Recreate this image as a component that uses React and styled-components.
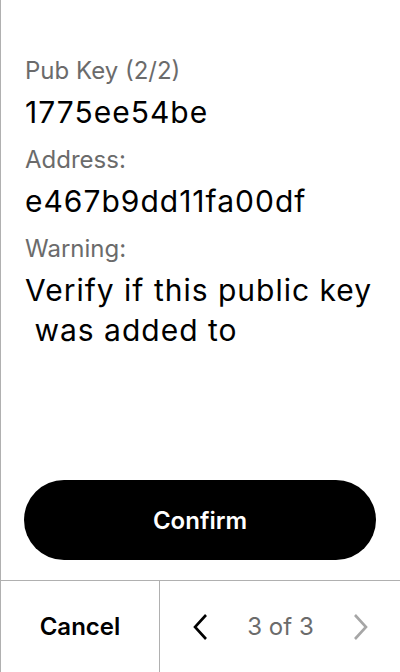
import React from 'react';
import styled, { createGlobalStyle } from 'styled-components';

const GlobalStyle = createGlobalStyle`
    html, body {
        margin: 0;
        padding: 0;
        background: #fff;
    }
    body {
        font-family: Inter, "Noto Sans", "Liberation Sans", sans-serif;
    }
`;

const fields = [
    { label: 'Pub Key (2/2)', value: '1775ee54be' },
    { label: 'Address:', value: 'e467b9dd11fa00df' },
    { label: 'Warning:', value: 'Verify if this public key\n was added to' },
];

const Chevron = ({ dir, color }) => (
    <svg width="16" height="28" viewBox="0 0 16 28">
        {dir === 'left' ? (
            <polyline points="14,2 3,14 14,26" fill="none" stroke={color} strokeWidth="2.6" />
        ) : (
            <polyline points="2,2 13,14 2,26" fill="none" stroke={color} strokeWidth="2.6" />
        )}
    </svg>
);

const App = () => {
    return (
        <Screen>
            <GlobalStyle />
            <Content>
                {fields.map(f => (
                    <Field key={f.label}>
                        <Label>{f.label}</Label>
                        <Value>{f.value}</Value>
                    </Field>
                ))}
            </Content>

            <ButtonArea>
                <ConfirmButton>Confirm</ConfirmButton>
            </ButtonArea>

            <Footer>
                <CancelButton>Cancel</CancelButton>
                <Nav>
                    <NavArrow><Chevron dir="left" color="#000" /></NavArrow>
                    <PageCount>3 of 3</PageCount>
                    <NavArrow><Chevron dir="right" color="#a6a6a6" /></NavArrow>
                </Nav>
            </Footer>
        </Screen>
    );
};
export default App;

const Screen = styled.div`
    width: 400px;
    height: 672px;
    box-sizing: border-box;
    border-left: 1px solid #b0b0b0;
    display: flex;
    flex-direction: column;
    background: #fff;
`;

const Content = styled.div`
    flex: 1;
    padding: 55px 20px 0 24px;
    display: flex;
    flex-direction: column;
    gap: 12px;
`;

const Field = styled.div`
    display: flex;
    flex-direction: column;
    gap: 5px;
`;

const Label = styled.div`
    font-size: 24px;
    line-height: 32px;
    color: #6b6b6b;
`;

const Value = styled.div`
    font-size: 30px;
    line-height: 40px;
    letter-spacing: 1px;
    color: #000;
    white-space: pre;
`;

const ButtonArea = styled.div`
    padding: 0 24px 20px 23px;
`;

const ConfirmButton = styled.button`
    display: block;
    width: 100%;
    height: 80px;
    border: none;
    border-radius: 40px;
    background: #000;
    color: #fff;
    font-family: inherit;
    font-size: 24px;
    font-weight: 600;
`;

const Footer = styled.div`
    height: 92px;
    box-sizing: border-box;
    border-top: 1px solid #b0b0b0;
    display: grid;
    grid-template-columns: 159px 1fr;
`;

const CancelButton = styled.div`
    display: flex;
    align-items: center;
    justify-content: center;
    font-size: 24px;
    font-weight: 600;
    color: #000;
    border-right: 1px solid #b0b0b0;
`;

const Nav = styled.div`
    display: flex;
    align-items: center;
    justify-content: space-between;
    padding: 0 31px 0 32px;
`;

const NavArrow = styled.div`
    display: flex;
    align-items: center;
`;

const PageCount = styled.div`
    font-size: 24px;
    color: #6b6b6b;
`;
